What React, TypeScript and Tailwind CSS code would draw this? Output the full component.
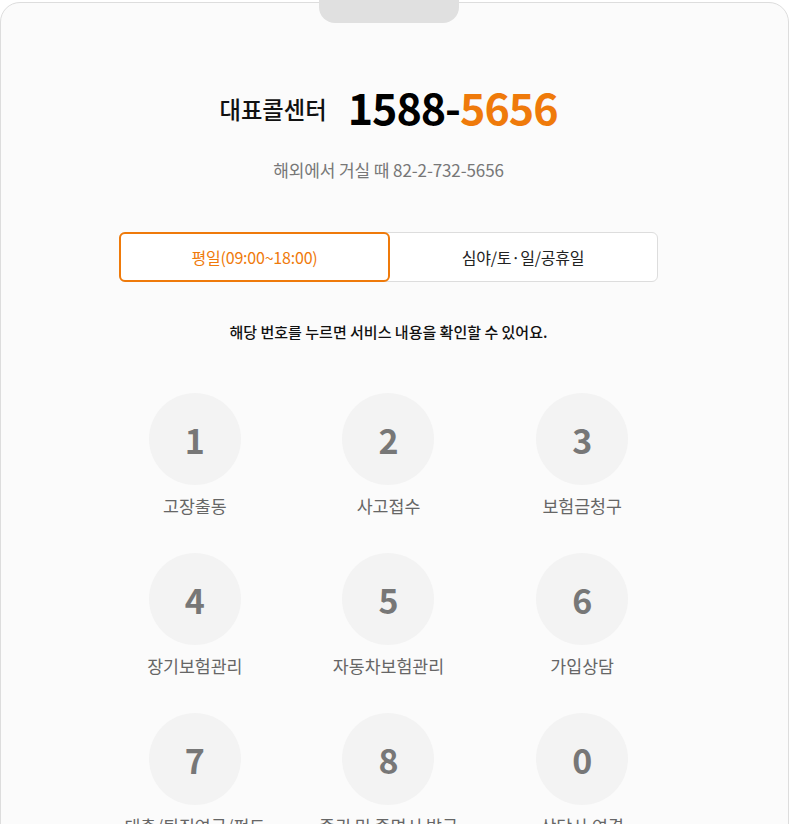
const KEYS = [
  { num: '1', label: '고장출동' },
  { num: '2', label: '사고접수' },
  { num: '3', label: '보험금청구' },
  { num: '4', label: '장기보험관리' },
  { num: '5', label: '자동차보험관리' },
  { num: '6', label: '가입상담' },
  { num: '7', label: '대출/퇴직연금/펀드' },
  { num: '8', label: '증권 및 증명서 발급' },
  { num: '0', label: '상담사 연결' },
]

export default function App() {
  return (
    <div
      className="relative w-[789px] h-[824px] overflow-hidden bg-white"
      style={{ fontFamily: '"Noto Sans CJK KR", "Noto Sans", sans-serif' }}
    >
      {/* sheet */}
      <div className="mt-[2px] h-[900px] rounded-t-[20px] border border-[#dddddd] bg-[#fbfbfb]">
        <div className="w-[775px] pt-[73px]">
          {/* call center */}
          <div className="flex items-center justify-center gap-[21px] h-[60px]">
            <span className="text-[23.3px] font-medium text-[#111] mt-[6px]">대표콜센터</span>
            <span className="text-[43px] font-bold leading-none tracking-[-1px]">
              <span className="text-black">1588-</span>
              <span className="text-[#ef7a0a]">5656</span>
            </span>
          </div>
          <p className="mt-[22px] text-center text-[17px] leading-[24px] text-[#777] tracking-[-0.1px]">
            해외에서 거실 때 82-2-732-5656
          </p>

          {/* tabs */}
          <div className="mx-auto mt-[50px] flex h-[50px] w-[539px] rounded-[6px] border border-[#dddddd] bg-white">
            <button className="-m-px flex h-[50px] w-[271px] items-center justify-center rounded-[6px] border-2 border-[#ef7a0a] bg-white text-[16px] text-[#ef7a0a] tracking-[-0.2px]">
              평일(09:00~18:00)
            </button>
            <button className="flex flex-1 items-center justify-center text-[16px] text-[#222] tracking-[-0.2px]">
              심야/토·일/공휴일
            </button>
          </div>

          <p className="mt-[39px] text-center text-[15px] leading-[22px] font-medium text-[#111]">
            해당 번호를 누르면 서비스 내용을 확인할 수 있어요.
          </p>

          {/* keypad */}
          <div className="mx-auto mt-[50px] grid w-[581px] grid-cols-3 gap-y-[35px]">
            {KEYS.map((k) => (
              <div key={k.num} className="flex flex-col items-center">
                <div className="flex h-[92px] w-[92px] items-center justify-center rounded-full bg-[#f3f3f3] text-[34px] font-bold text-[#777]">
                  {k.num}
                </div>
                <span className="mt-[9px] text-[17.3px] leading-[24px] text-[#666] whitespace-nowrap">
                  {k.label}
                </span>
              </div>
            ))}
          </div>
        </div>
      </div>

      {/* grab handle */}
      <div className="absolute left-[319px] top-0 h-[23px] w-[140px] rounded-b-[16px] bg-[#e0e0e0]" />
    </div>
  )
}
